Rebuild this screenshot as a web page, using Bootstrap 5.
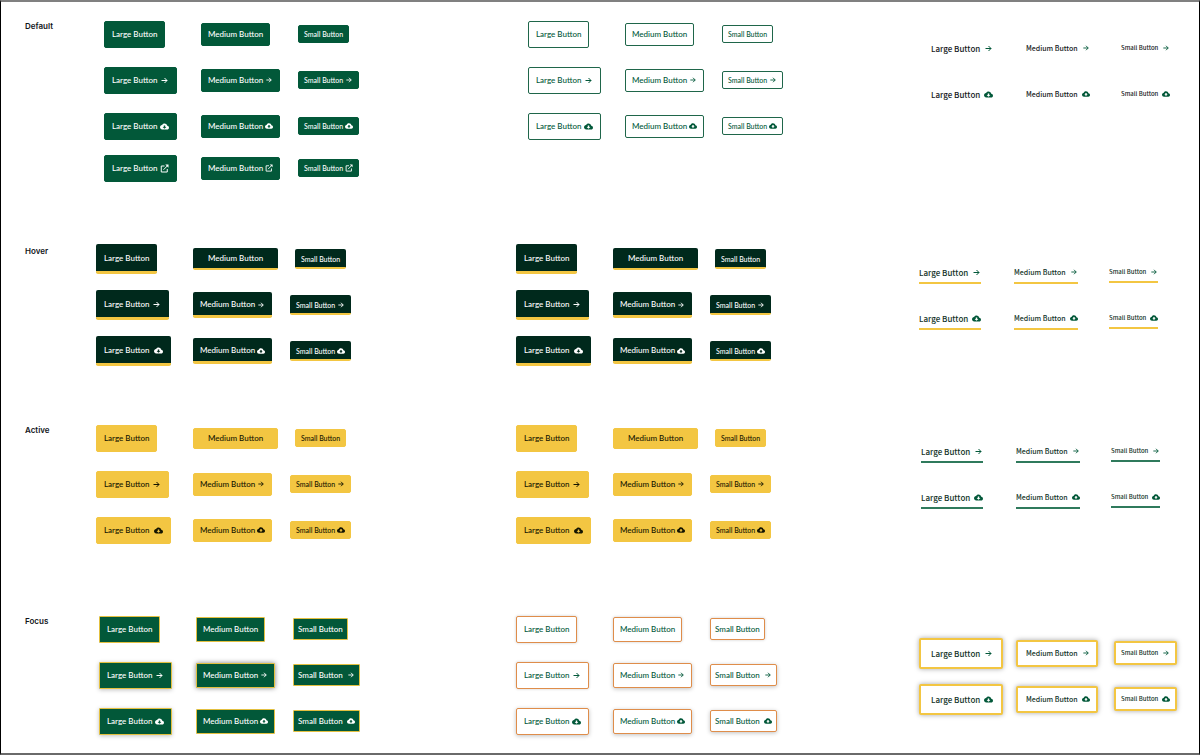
<!DOCTYPE html>
<html lang="en">
<head>
<meta charset="utf-8">
<meta name="viewport" content="width=device-width, initial-scale=1">
<title>Button states</title>
<link href="https://cdn.jsdelivr.net/npm/bootstrap@5.3.0/dist/css/bootstrap.min.css" rel="stylesheet">
<style>
  :root { --green: #025839; --pine: #00291c; --gold: #f3c642; --ink: #101418; }
  body { font-family: Lato, sans-serif; background: #fff; color: var(--ink); }
  .sheet { min-height: 100vh; border: 1px solid #000; border-top: 2px solid #808080; border-bottom: 2px solid #6a6a6a; padding-top: 9px; }

  /* one band per state: label, filled, outlined, text-only */
  .state { display: grid; grid-template-columns: 95px 420fr 403fr 280fr; }
  .state-default { margin-bottom: 49px; }
  .state-hover { margin-bottom: 41px; }
  .state-active { margin-bottom: 53px; }
  .state-name { font: 600 8px/10px Inter, sans-serif; padding: 10px 0 0 24px; margin: 0; }

  /* large, medium and small side by side */
  .set { display: grid; grid-template-columns: 97px 97px max-content; grid-auto-rows: 46px; align-content: start; align-items: center; justify-items: start; }
  .set-text { grid-template-columns: 95px 95px max-content; }
  .state-default .set-fill { grid-template-rows: 46px 46px 46px 38px; padding-left: 8px; }
  .state-default .set-line { padding-left: 12px; }
  .state-default .set-text { padding: 14px 0 0 12px; }
  .state-hover .set-text { padding-top: 16px; }
  .state-active .set-text { padding: 16px 0 0 2px; }
  .state-focus .set-fill { padding-left: 3px; }
  .state-focus .set-text { grid-template-columns: 97px 98px max-content; padding-top: 24px; }

  .btn { display: inline-flex; align-items: center; white-space: nowrap; border-width: 1px; border-radius: 2px; font-weight: 500; transition: none; }
  .btn svg { width: 9px; height: 9px; margin-left: 3px; flex: none; }
  .size-l { font-size: 8px; line-height: 11px; padding: 7px; }
  .size-m { font-size: 8px; line-height: 11px; padding: 5px 6px; }
  .size-s { font-size: 7px; line-height: 10px; padding: 3px 5px; }
  .size-m svg, .size-s svg { width: 8px; height: 8px; margin-left: 2px; }

  .fill, .fill:hover { background: var(--green); border-color: var(--green); color: #fff; }
  .line, .line:hover { background: #fff; border-color: #1f664a; color: var(--green); }

  .over, .over:hover { background: var(--pine); border: 0 solid var(--gold); border-bottom-width: 3px; color: #fff; }
  .over.size-l { padding: 9px 8px 7px; }
  .over.size-m { padding: 7px 7px 5px; }
  .over.size-s { padding: 5px 6px 3px; border-bottom-width: 2px; }
  .press, .press:hover { background: var(--gold); border-color: var(--gold); color: #141400; }
  .press.wide { padding: 4px 14px; }
  .over.wide { padding: 5px 15px 4px; border-bottom-width: 2px; }
  .btn.roomy svg { margin-left: 5px; }
  .mid { justify-self: center; }

  .state-focus .size-m { padding-top: 6px; padding-bottom: 6px; }
  .state-focus .size-s { padding: 5px 4px; }
  .state-focus .size-s svg { margin-left: 4px; }
  .state-focus .fill, .state-focus .line { font-size: 8px; border-radius: 1px; }
  .state-focus .fill { border-color: #e3c040; }
  .state-focus .line { border-color: #df8d4a; border-radius: 2px; box-shadow: 0 0 3px rgba(0,0,0,.2); }
  .state-focus .glow { box-shadow: 0 1px 4px rgba(0,0,0,.25); }
  .state-focus .glow-deep { box-shadow: 0 0 5px rgba(0,0,0,.5); }

  .plain, .plain:hover { font-family: "Noto Sans CJK JP", sans-serif; color: #123328; background: none; border: 0; border-radius: 0; padding: 0; }
  .plain.size-m { font-size: 7px; }
  .plain.size-s { font-size: 6px; }
  .btn.plain svg { color: var(--green); margin-left: 4px; }
  .state-default .plain { color: #16191c; }
  .state-hover .plain { border-bottom: 2px solid var(--gold); padding-bottom: 4px; }
  .state-active .plain { border-bottom: 2px solid #2f7a5c; padding-bottom: 4px; }
  .state-focus .plain { border: 2px solid var(--gold); border-radius: 2px; background: #fff; box-shadow: 0 0 5px rgba(0,0,0,.35); padding: 8px 8px 8px 10px; }
  .state-focus .plain.size-m { padding: 6px 6px 6px 8px; }
  .state-focus .plain.size-s { padding: 5px; }
</style>
</head>
<body>
<svg class="d-none" aria-hidden="true">
  <symbol id="arrow" viewBox="0 0 18 18"><path d="M3 9h11M9 4l5 5-5 5" fill="none" stroke="currentColor" stroke-width="2"/></symbol>
  <symbol id="cloud" viewBox="0 2 24 20"><path fill="currentColor" d="M19.350 10.040C18.670 6.590 15.640 4 12 4 9.110 4 6.600 5.640 5.350 8.040 2.340 8.360 0 10.910 0 14c0 3.310 2.690 6 6 6h13c2.760 0 5-2.240 5-5 0-2.640-2.050-4.780-4.650-4.960zM17 13l-5 5-5-5h3V9h4v4h3z"/></symbol>
  <symbol id="out" viewBox="0 0 18 18"><path d="M9 4H2.500v12h12V10M7 11.500L14.500 4" fill="none" stroke="currentColor" stroke-width="2"/><path d="M10.500 1H17v6.500z" fill="currentColor"/></symbol>
</svg>

<main class="sheet">
  <section class="state state-default">
    <h2 class="state-name">Default</h2>
    <div class="set set-fill">
      <button type="button" class="btn fill size-l">Large Button</button>
      <button type="button" class="btn fill size-m">Medium Button</button>
      <button type="button" class="btn fill size-s">Small Button</button>
      <button type="button" class="btn fill size-l">Large Button<svg><use href="#arrow"/></svg></button>
      <button type="button" class="btn fill size-m">Medium Button<svg><use href="#arrow"/></svg></button>
      <button type="button" class="btn fill size-s">Small Button<svg><use href="#arrow"/></svg></button>
      <button type="button" class="btn fill size-l">Large Button<svg><use href="#cloud"/></svg></button>
      <button type="button" class="btn fill size-m">Medium Button<svg><use href="#cloud"/></svg></button>
      <button type="button" class="btn fill size-s">Small Button<svg><use href="#cloud"/></svg></button>
      <button type="button" class="btn fill size-l">Large Button<svg><use href="#out"/></svg></button>
      <button type="button" class="btn fill size-m">Medium Button<svg><use href="#out"/></svg></button>
      <button type="button" class="btn fill size-s">Small Button<svg><use href="#out"/></svg></button>
    </div>
    <div class="set set-line">
      <button type="button" class="btn line size-l">Large Button</button>
      <button type="button" class="btn line size-m">Medium Button</button>
      <button type="button" class="btn line size-s">Small Button</button>
      <button type="button" class="btn line size-l">Large Button<svg><use href="#arrow"/></svg></button>
      <button type="button" class="btn line size-m">Medium Button<svg><use href="#arrow"/></svg></button>
      <button type="button" class="btn line size-s">Small Button<svg><use href="#arrow"/></svg></button>
      <button type="button" class="btn line size-l">Large Button<svg><use href="#cloud"/></svg></button>
      <button type="button" class="btn line size-m">Medium Button<svg><use href="#cloud"/></svg></button>
      <button type="button" class="btn line size-s">Small Button<svg><use href="#cloud"/></svg></button>
    </div>
    <div class="set set-text">
      <button type="button" class="btn plain size-l">Large Button<svg><use href="#arrow"/></svg></button>
      <button type="button" class="btn plain size-m">Medium Button<svg><use href="#arrow"/></svg></button>
      <button type="button" class="btn plain size-s">Small Button<svg><use href="#arrow"/></svg></button>
      <button type="button" class="btn plain size-l">Large Button<svg><use href="#cloud"/></svg></button>
      <button type="button" class="btn plain size-m">Medium Button<svg><use href="#cloud"/></svg></button>
      <button type="button" class="btn plain size-s">Small Button<svg><use href="#cloud"/></svg></button>
    </div>
  </section>

  <section class="state state-hover">
    <h2 class="state-name">Hover</h2>
    <div class="set set-fill">
      <button type="button" class="btn over size-l">Large Button</button>
      <button type="button" class="btn over size-m wide">Medium Button</button>
      <button type="button" class="btn over size-s mid">Small Button</button>
      <button type="button" class="btn over size-l">Large Button<svg><use href="#arrow"/></svg></button>
      <button type="button" class="btn over size-m">Medium Button<svg><use href="#arrow"/></svg></button>
      <button type="button" class="btn over size-s">Small Button<svg><use href="#arrow"/></svg></button>
      <button type="button" class="btn over size-l roomy">Large Button<svg><use href="#cloud"/></svg></button>
      <button type="button" class="btn over size-m">Medium Button<svg><use href="#cloud"/></svg></button>
      <button type="button" class="btn over size-s">Small Button<svg><use href="#cloud"/></svg></button>
    </div>
    <div class="set set-line">
      <button type="button" class="btn over size-l">Large Button</button>
      <button type="button" class="btn over size-m wide">Medium Button</button>
      <button type="button" class="btn over size-s mid">Small Button</button>
      <button type="button" class="btn over size-l">Large Button<svg><use href="#arrow"/></svg></button>
      <button type="button" class="btn over size-m">Medium Button<svg><use href="#arrow"/></svg></button>
      <button type="button" class="btn over size-s">Small Button<svg><use href="#arrow"/></svg></button>
      <button type="button" class="btn over size-l roomy">Large Button<svg><use href="#cloud"/></svg></button>
      <button type="button" class="btn over size-m">Medium Button<svg><use href="#cloud"/></svg></button>
      <button type="button" class="btn over size-s">Small Button<svg><use href="#cloud"/></svg></button>
    </div>
    <div class="set set-text">
      <button type="button" class="btn plain size-l">Large Button<svg><use href="#arrow"/></svg></button>
      <button type="button" class="btn plain size-m">Medium Button<svg><use href="#arrow"/></svg></button>
      <button type="button" class="btn plain size-s">Small Button<svg><use href="#arrow"/></svg></button>
      <button type="button" class="btn plain size-l">Large Button<svg><use href="#cloud"/></svg></button>
      <button type="button" class="btn plain size-m">Medium Button<svg><use href="#cloud"/></svg></button>
      <button type="button" class="btn plain size-s">Small Button<svg><use href="#cloud"/></svg></button>
    </div>
  </section>

  <section class="state state-active">
    <h2 class="state-name">Active</h2>
    <div class="set set-fill">
      <button type="button" class="btn press size-l">Large Button</button>
      <button type="button" class="btn press size-m wide">Medium Button</button>
      <button type="button" class="btn press size-s mid">Small Button</button>
      <button type="button" class="btn press size-l">Large Button<svg><use href="#arrow"/></svg></button>
      <button type="button" class="btn press size-m">Medium Button<svg><use href="#arrow"/></svg></button>
      <button type="button" class="btn press size-s">Small Button<svg><use href="#arrow"/></svg></button>
      <button type="button" class="btn press size-l roomy">Large Button<svg><use href="#cloud"/></svg></button>
      <button type="button" class="btn press size-m">Medium Button<svg><use href="#cloud"/></svg></button>
      <button type="button" class="btn press size-s">Small Button<svg><use href="#cloud"/></svg></button>
    </div>
    <div class="set set-line">
      <button type="button" class="btn press size-l">Large Button</button>
      <button type="button" class="btn press size-m wide">Medium Button</button>
      <button type="button" class="btn press size-s mid">Small Button</button>
      <button type="button" class="btn press size-l">Large Button<svg><use href="#arrow"/></svg></button>
      <button type="button" class="btn press size-m">Medium Button<svg><use href="#arrow"/></svg></button>
      <button type="button" class="btn press size-s">Small Button<svg><use href="#arrow"/></svg></button>
      <button type="button" class="btn press size-l roomy">Large Button<svg><use href="#cloud"/></svg></button>
      <button type="button" class="btn press size-m">Medium Button<svg><use href="#cloud"/></svg></button>
      <button type="button" class="btn press size-s">Small Button<svg><use href="#cloud"/></svg></button>
    </div>
    <div class="set set-text">
      <button type="button" class="btn plain size-l">Large Button<svg><use href="#arrow"/></svg></button>
      <button type="button" class="btn plain size-m">Medium Button<svg><use href="#arrow"/></svg></button>
      <button type="button" class="btn plain size-s">Small Button<svg><use href="#arrow"/></svg></button>
      <button type="button" class="btn plain size-l">Large Button<svg><use href="#cloud"/></svg></button>
      <button type="button" class="btn plain size-m">Medium Button<svg><use href="#cloud"/></svg></button>
      <button type="button" class="btn plain size-s">Small Button<svg><use href="#cloud"/></svg></button>
    </div>
  </section>

  <section class="state state-focus">
    <h2 class="state-name">Focus</h2>
    <div class="set set-fill">
      <button type="button" class="btn fill size-l">Large Button</button>
      <button type="button" class="btn fill size-m">Medium Button</button>
      <button type="button" class="btn fill size-s">Small Button</button>
      <button type="button" class="btn fill size-l glow">Large Button<svg><use href="#arrow"/></svg></button>
      <button type="button" class="btn fill size-m glow-deep">Medium Button<svg><use href="#arrow"/></svg></button>
      <button type="button" class="btn fill size-s">Small Button<svg><use href="#arrow"/></svg></button>
      <button type="button" class="btn fill size-l glow">Large Button<svg><use href="#cloud"/></svg></button>
      <button type="button" class="btn fill size-m">Medium Button<svg><use href="#cloud"/></svg></button>
      <button type="button" class="btn fill size-s">Small Button<svg><use href="#cloud"/></svg></button>
    </div>
    <div class="set set-line">
      <button type="button" class="btn line size-l">Large Button</button>
      <button type="button" class="btn line size-m">Medium Button</button>
      <button type="button" class="btn line size-s">Small Button</button>
      <button type="button" class="btn line size-l">Large Button<svg><use href="#arrow"/></svg></button>
      <button type="button" class="btn line size-m glow">Medium Button<svg><use href="#arrow"/></svg></button>
      <button type="button" class="btn line size-s glow">Small Button<svg><use href="#arrow"/></svg></button>
      <button type="button" class="btn line size-l glow">Large Button<svg><use href="#cloud"/></svg></button>
      <button type="button" class="btn line size-m glow">Medium Button<svg><use href="#cloud"/></svg></button>
      <button type="button" class="btn line size-s glow">Small Button<svg><use href="#cloud"/></svg></button>
    </div>
    <div class="set set-text">
      <button type="button" class="btn plain size-l">Large Button<svg><use href="#arrow"/></svg></button>
      <button type="button" class="btn plain size-m">Medium Button<svg><use href="#arrow"/></svg></button>
      <button type="button" class="btn plain size-s">Small Button<svg><use href="#arrow"/></svg></button>
      <button type="button" class="btn plain size-l">Large Button<svg><use href="#cloud"/></svg></button>
      <button type="button" class="btn plain size-m">Medium Button<svg><use href="#cloud"/></svg></button>
      <button type="button" class="btn plain size-s">Small Button<svg><use href="#cloud"/></svg></button>
    </div>
  </section>
</main>
<script src="https://cdn.jsdelivr.net/npm/bootstrap@5.3.0/dist/js/bootstrap.bundle.min.js"></script>
</body>
</html>
